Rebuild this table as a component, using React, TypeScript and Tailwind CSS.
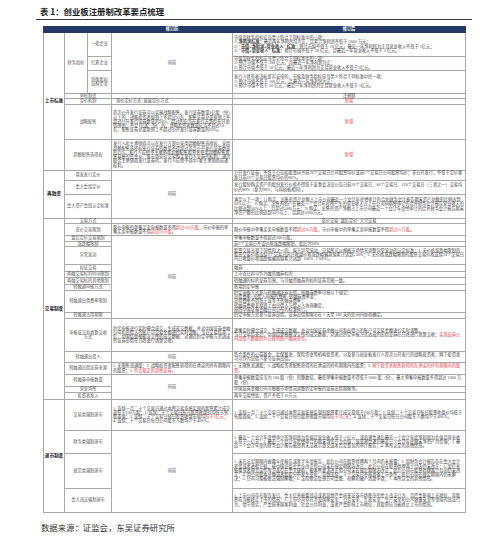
import React from "react";

type TdProps = React.TdHTMLAttributes<HTMLTableCellElement>;

function Td({ className = "", ...p }: TdProps) {
  return <td className={`border border-[#a8a8a8] p-0 align-middle ${className}`} {...p} />;
}

// 一级分类（上市标准 / 再融资 ...）
function Cat({ children, rowSpan }: { children: React.ReactNode; rowSpan: number }) {
  return (
    <Td rowSpan={rowSpan} className="text-center text-[4.6px] font-bold text-[#1a1a1a]">
      {children}
    </Td>
  );
}

function Lab({ children, colSpan, rowSpan }: { children: React.ReactNode; colSpan?: number; rowSpan?: number }) {
  return (
    <Td colSpan={colSpan} rowSpan={rowSpan} className="px-[1px] text-center text-[#555]">
      {children}
    </Td>
  );
}

function Txt({ children, className = "" }: { children?: React.ReactNode; className?: string }) {
  return <Td className={`px-[1px] text-left text-[#444] ${className}`}>{children}</Td>;
}

function Same({ rowSpan }: { rowSpan?: number }) {
  return (
    <Td rowSpan={rowSpan} className="text-center text-[#555]">
      同前
    </Td>
  );
}

function New() {
  return <Td className="text-center text-[#e2404a]">新增</Td>;
}

const Red = ({ children }: { children: React.ReactNode }) => <span className="text-[#e2404a]">{children}</span>;

export default function App() {
  return (
    <div className="h-[538px] w-[500px] overflow-hidden bg-white font-['Liberation_Serif','Noto_Sans_CJK_SC',serif]">
      <div className="h-[19px] pl-[40px] pt-[6px] font-['Noto_Sans_CJK_SC',sans-serif] text-[8.4px] font-bold leading-[10px] text-[#1c1c1c]">
        表 1：创业板注册制改革要点梳理
      </div>
      <div className="ml-[36px] h-px w-[436px] bg-[#3a3a3a]" />
      <div className="pl-[43px] pt-[6px]">
        <table className="w-[422px] table-fixed border-collapse text-[4.2px] leading-[4.25px]">
          <colgroup>
            <col className="w-[21px]" />
            <col className="w-[23px]" />
            <col className="w-[24px]" />
            <col className="w-[121px]" />
            <col className="w-[233px]" />
          </colgroup>
          <tbody>
            <tr className="h-[6px] bg-[#243a66] font-bold text-white">
              <td colSpan={3} className="border border-[#243a66]" />
              <td className="border border-[#243a66] text-center">修订前</td>
              <td className="border border-[#243a66] text-center">修订后</td>
            </tr>

            {/* 上市标准 */}
            <tr className="h-[24px]">
              <Cat rowSpan={7}>上市标准</Cat>
              <Lab rowSpan={3}>财务指标</Lab>
              <Lab>一般企业</Lab>
              <Same rowSpan={3} />
              <Txt>
                <div>市值及财务指标应当至少符合下列标准中的一项：</div>
                <div>1) <b>净利润标准：</b>最近两年净利润均为正，且累计净利润不低于 5000 万元；</div>
                <div>2) <b>"市值+净利润+营业收入" 标准：</b>预计市值不低于 10 亿元，最近一年净利润为正且营业收入不低于 1亿元；</div>
                <div>3) <b>"市值+营业收入" 标准：</b>预计市值不低于 50 亿元，且最近一年营业收入不低于 3 亿元。</div>
              </Txt>
            </tr>
            <tr className="h-[13px]">
              <Lab>红筹企业</Lab>
              <Txt>
                <div>市值及财务指标应当至少符合下列标准中的一项：</div>
                <div>1) 预计市值不低于 100 亿元，且最近一年净利润为正；</div>
                <div>2) 预计市值不低于 50 亿元，最近一年净利润为正且营业收入不低于5亿元。</div>
              </Txt>
            </tr>
            <tr className="h-[23px]">
              <Lab>
                特殊股权
                <br />
                结构企业
              </Lab>
              <Txt>
                <div>发行人具有表决权差异安排的，市值及财务指标应当至少符合下列标准中的一项：</div>
                <div>1) 预计市值不低于 100 亿元，且最近一年净利润为正；</div>
                <div>2) 预计市值不低于 50 亿元，最近一年净利润为正且营业收入不低于 5亿元。</div>
              </Txt>
            </tr>
            <tr className="h-[5px]">
              <Lab colSpan={2}>审核制度</Lab>
              <Txt />
              <Td className="text-center text-[#444]">注册制</Td>
            </tr>
            <tr className="h-[6px]">
              <Lab colSpan={2}>定价机制</Lab>
              <Txt className="pl-[4px]">询价定价方式+直接定价方式</Txt>
              <New />
            </tr>
            <tr className="h-[35px]">
              <Lab colSpan={2}>战略配售</Lab>
              <Txt>
                首次公开发行证券可以实施战略配售。发行证券数量1亿股（份）以上的，战略投资者原则上不超过35名，配售证券总量原则上不超过公开发行证券数量的30%，超过的应当在发行方案中充分说明理由；不足1亿股（份）的，战略投资者数量应当不超过10名，配售证券总量原则上不超过公开发行证券数量的20%。
              </Txt>
              <New />
            </tr>
            <tr className="h-[31px]">
              <Lab colSpan={2}>超额配售选择权</Lab>
              <Txt>
                发行人和主承销商可以在发行方案中采用超额配售选择权，采用超额配售选择权发行证券的数量不得超过首次公开发行证券数量的15%。发行人应授予主承销商超额配售股票并使用超额配售股票募集的资金从二级市场竞价交易购买发行人证券的权利，通过联合主承销商发行证券的，发行人应授予其中1家主承销商前述权利。
              </Txt>
              <New />
            </tr>

            {/* 再融资 */}
            <tr className="h-[10px]">
              <Cat rowSpan={3}>再融资</Cat>
              <Lab colSpan={2}>增发发行定价</Lab>
              <Same rowSpan={3} />
              <Txt>
                公开发行证券，不低于公告招股意向书前20个交易日公司股票均价或前1个交易日公司股票均价；非公开发行，不低于定价基准日前20个交易日股票均价的80%。
              </Txt>
            </tr>
            <tr className="h-[14px]">
              <Lab colSpan={2}>重大重组定价</Lab>
              <Txt>
                发行股份购买资产的股份发行价格不得低于董事会决议公告日前20个交易日、60个交易日、120个交易日（三者之一）交易均价的80%（原为90%，与科创板相同）。
              </Txt>
            </tr>
            <tr className="h-[24px]">
              <Lab colSpan={2}>重大资产重组认定标准</Lab>
              <Txt>
                满足以下一项：1) 购买、出售的资产总额占上市公司最近一个会计年度经审计的合并财务会计报告期末资产总额的比例达到50%以上；2) 购买、出售的资产在最近一个会计年度所产生的营业收入占上市公司同期经审计的合并财务会计报告营业收入的比例达到50%以上，且超过5000万元；3) 购买、出售的资产净额占上市公司最近一个会计年度经审计的合并财务会计报告期末净资产额的比例达到50%以上，且超过5000万元。
              </Txt>
            </tr>

            {/* 交易制度 */}
            <tr className="h-[5px]">
              <Cat rowSpan={17}>交易制度</Cat>
              <Lab colSpan={2}>交易方式</Lab>
              <Txt />
              <Td className="text-center text-[#444]">竞价交易+盘后定价+大宗交易</Td>
            </tr>
            <tr className="h-[12px]">
              <Lab colSpan={2}>竞价交易限制</Lab>
              <Txt>
                限价申报的单笔买卖申报数量不得<Red>超过100万股</Red>，市价申报的单笔买卖申报数量不得<Red>超过50万股</Red>。
              </Txt>
              <Txt>
                限价申报中单笔买卖申报数量不得<Red>超过30万股</Red>，市价申报中的单笔买卖申报数量不得<Red>超过15万股</Red>。
              </Txt>
            </tr>
            <tr className="h-[5px]">
              <Lab colSpan={2}>盘后定价交易限制</Lab>
              <Same rowSpan={9} />
              <Txt>单笔申报数量不得超过100万股。</Txt>
            </tr>
            <tr className="h-[5px]">
              <Lab colSpan={2}>涨跌幅限制</Lab>
              <Txt>前5个交易日不设价格涨跌幅限制，此后为20%</Txt>
            </tr>
            <tr className="h-[18px]">
              <Lab colSpan={2}>异常波动</Lab>
              <Txt>
                股票交易出现下列情形之一的，属于异常波动，交易所可以根据市场情况调整异常波动的认定标准：1. 无价格涨跌幅限制的股票交易价格连续3个交易日内日收盘价格涨跌幅偏离值累计达到±30%；2. 无价格涨跌幅限制的股票交易价格连续10个交易日内日收盘价格涨跌幅偏离值累计达到+100%（-50%）。
              </Txt>
            </tr>
            <tr className="h-[7px]">
              <Lab colSpan={2}>权证交易</Lab>
              <Txt>融券</Txt>
            </tr>
            <tr className="h-[6px]">
              <Lab colSpan={2}>两融交易标的时间限制</Lab>
              <Txt>上市首日起可作为融资融券标的</Txt>
            </tr>
            <tr className="h-[7px]">
              <Lab colSpan={2}>两融交易标的其他限制</Lab>
              <Txt>转融通的标的证券范围，与可融资融券的标的证券范围一致。</Txt>
            </tr>
            <tr className="h-[6px]">
              <Lab colSpan={2}>转融通申报方式</Lab>
              <Txt>新增约定申报</Txt>
            </tr>
            <tr className="h-[22px]">
              <Lab colSpan={2}>转融通出借费率限制</Lab>
              <Txt>
                <div>约定申报方式参与转融通证券出借，转融券费率可按以下规定：</div>
                <div>出借费率=出借人申报的费率+转融券费率差；</div>
                <div>出借费率不得低于或等于转融券费率；</div>
                <div>转融券费率差原则上由出借人与借入人协商确定，</div>
                <div>按照中国证券金融公司公布的标准执行。</div>
              </Txt>
            </tr>
            <tr className="h-[6px]">
              <Lab colSpan={2}>转融通占用期限</Lab>
              <Txt>约定申报方式参与证券出借，证券出借期限可在 1 天至 182 天的区间内协商确定。</Txt>
            </tr>
            <tr className="h-[33px]">
              <Lab colSpan={2}>
                申报成交和清算交收
                <br />
                方式
              </Lab>
              <Txt>
                约定申报进行实时撮合成交，生成成交数据，并对中国证券金融公司和出借人的账户可交易余额进行实时调整。当日交易结束后，中国结算根据深交所的成交数据，对通过约定申报方式达成的证券出借在日终进行清算交收。
              </Txt>
              <Txt>
                <div>逐笔实时撮合成交，生成成交数据，并对中国证券金融公司和出借人的账户可交易余额进行实时调整。</div>
                <div>
                  当日交易结束后，中国结算根据深交所的成交数据，对通过约定申报方式达成的出借证券在日终进行清算交收；
                  <Red>实现证券公司出借人数据转为日终转账户融券业务。</Red>
                </div>
              </Txt>
            </tr>
            <tr className="h-[11px]">
              <Lab colSpan={2}>转融通出借人</Lab>
              <Same />
              <Txt>
                符合条件的公募基金、社保基金、保险资金等机构投资者，以及参与创业板发行人首次公开发行的战略投资者，网下投资者可以作为出借人参与证券出借。
              </Txt>
            </tr>
            <tr className="h-[12px]">
              <Lab colSpan={2}>转融通出借证券来源</Lab>
              <Txt>
                1. 无限售流通股；2. 战略投资者配售获得的在承诺的持有期限内的股票；3. <Red>符合规定的其他证券。</Red>
              </Txt>
              <Txt>
                1. 无限售流通股；2. 战略投资者配售获得的在承诺的持有期限内的股票；3. <Red>网下投资者配售获得的在承诺的持有期限内的股票。</Red>
              </Txt>
            </tr>
            <tr className="h-[12px]">
              <Lab colSpan={2}>转融券申报数量</Lab>
              <Same rowSpan={3} />
              <Txt>
                单笔申报数量应当为 100 股（份）的整数倍，最低单笔申报数量不得低于1000 股（份），最大单笔申报数量不得超过 1000 万股（份）
              </Txt>
            </tr>
            <tr className="h-[6px]">
              <Lab colSpan={2}>营业场所</Lab>
              <Txt>中国证券金融公司可根据市场情况调整约定申报的证券出借期限等。</Txt>
            </tr>
            <tr className="h-[7px]">
              <Lab colSpan={2}>投资者准入</Lab>
              <Txt>两年交易经验，资产不低于10万元</Txt>
            </tr>

            {/* 退市制度 */}
            <tr className="h-[31px]">
              <Cat rowSpan={4}>退市制度</Cat>
              <Lab colSpan={2}>交易类强制退市</Lab>
              <Txt>
                1. 连续一百二十个交易日通过本所交易系统实现的股票累计成交量低于200万股；2. 连续二十个交易日每日股票收盘价均低于每股面值；3. 连续二十个交易日每日股票收盘市值均<Red>低于3亿元</Red>；4. 连续二十个交易日每日公司股东人数均少于400人。
              </Txt>
              <Txt>
                1. 连续一百二十个交易日通过本所交易系统实现的股票累计成交量低于200万股；2. 连续二十个交易日每日股票收盘价均低于每股面值；3. 连续二十个交易日每日股票收盘市值均<Red>低于5亿元</Red>；4. 连续二十个交易日每日公司股东人数均少于400人。
              </Txt>
            </tr>
            <tr className="h-[23px]">
              <Lab colSpan={2}>财务类强制退市</Lab>
              <Same rowSpan={3} />
              <Txt>
                1. 最近一个会计年度经审计的净利润为负值且营业收入低于一亿元，或追溯重述后最近一个会计年度净利润为负值且营业收入低于一亿元；2. 最近一个会计年度经审计的期末净资产为负值，或追溯重述后最近一个会计年度期末净资产为负值；3. 最近一个会计年度的财务会计报告被出具无法表示意见或者否定意见的审计报告；4. 本所认定的其他情形。
              </Txt>
            </tr>
            <tr className="h-[35px]">
              <Lab colSpan={2}>规范类强制退市</Lab>
              <Txt>
                1. 未在法定期限内披露年度报告或者半年度报告，此后公司在股票停牌两个月内仍未披露；2. 因财务会计报告存在重大会计差错或者虚假记载，被中国证监会责令改正但公司未在规定期限内改正，此后公司在股票停牌两个月内仍未改正；3. 因信息披露或者规范运作等方面存在重大缺陷，被本所要求改正但公司未在规定期限内改正，此后公司在股票停牌两个月内仍未改正；4. 因公司股本总额或者股权分布发生变化，导致连续二十个交易日不再具备上市条件，此后公司在规定期限内仍未解决；5. 公司可能被依法强制解散；6. 法院依法受理公司重整、和解和破产清算申请；7. 本所认定的其他情形。
              </Txt>
            </tr>
            <tr className="h-[24px]">
              <Lab colSpan={2}>重大违法强制退市</Lab>
              <Txt>
                1. 上市公司存在欺诈发行、重大信息披露违法或者其他严重损害证券市场秩序的重大违法行为，且严重影响上市地位，其股票应当被终止上市的情形；2. 上市公司存在涉及国家安全、公共安全、生态安全、生产安全和公众健康安全等领域的违法行为，情节恶劣，严重损害国家利益、社会公共利益，或者严重影响上市地位，其股票应当被终止上市的情形。
              </Txt>
            </tr>
          </tbody>
        </table>
      </div>
      <div className="pl-[41px] pt-[9px] font-['Noto_Sans_CJK_SC',sans-serif] text-[8.4px] leading-[10px] text-[#333]">
        数据来源：证监会，东吴证券研究所
      </div>
    </div>
  );
}
